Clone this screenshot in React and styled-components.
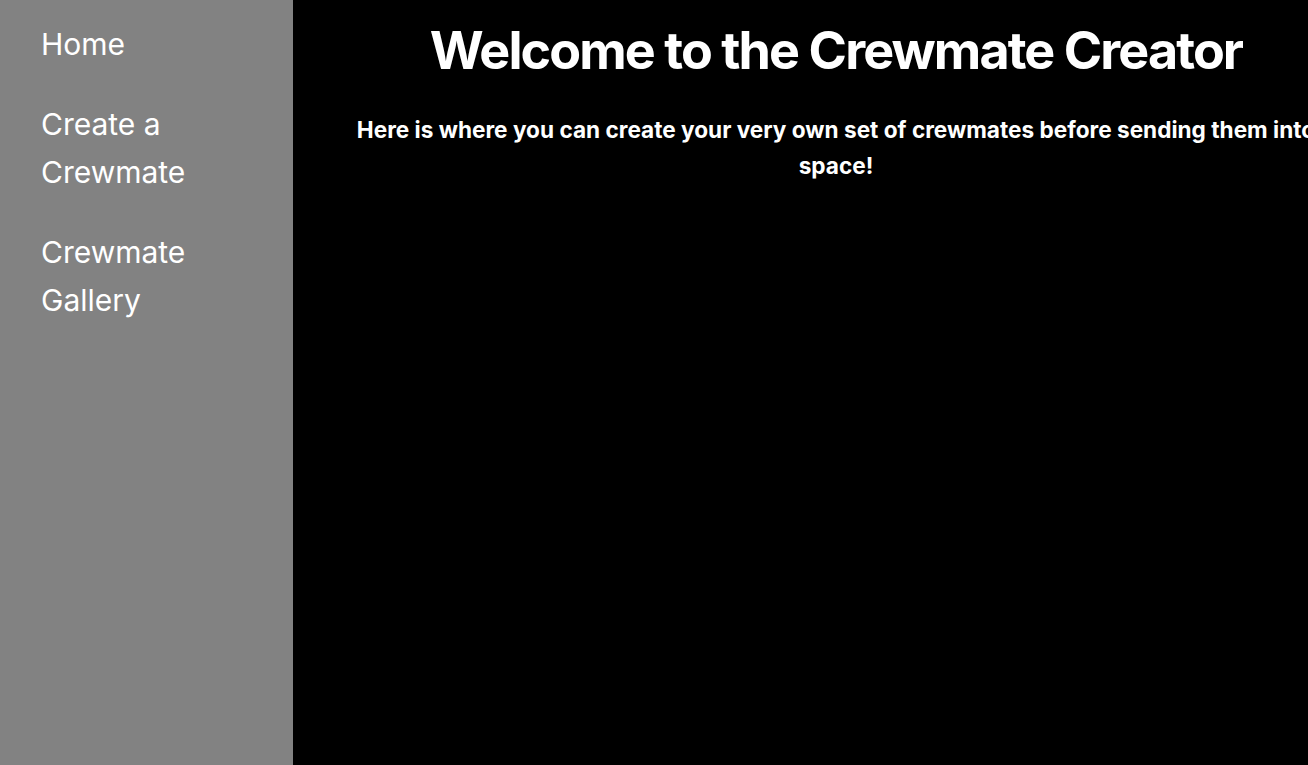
import styled, { createGlobalStyle } from 'styled-components';

const GlobalStyle = createGlobalStyle`
  html, body {
    margin: 0;
    padding: 0;
    height: 100%;
    overflow: hidden;
    background: #000;
    font-family: Inter, "Noto Sans", sans-serif;
  }
  #root {
    height: 100%;
  }
`;

const Layout = styled.div`
  display: flex;
  height: 100%;
`;

const Sidebar = styled.nav`
  flex: 0 0 293px;
  background: #828282;
  box-sizing: border-box;
  padding: 20px 0 0 41px;
  display: flex;
  flex-direction: column;
  gap: 32px;
`;

const NavLink = styled.a`
  display: block;
  width: 200px;
  color: #fff;
  font-size: 30px;
  line-height: 48px;
  text-decoration: none;
`;

const Main = styled.main`
  flex: 0 0 1086px;
  color: #fff;
  text-align: center;
  padding-top: 18px;
`;

const Title = styled.h1`
  margin: 0;
  font-size: 52px;
  font-weight: 700;
  line-height: 66px;
  letter-spacing: -1.9px;
`;

const Intro = styled.p`
  margin: 28px 0 0;
  padding: 0 40px;
  font-size: 22.6px;
  font-weight: 700;
  line-height: 36px;
`;

export default function App() {
  return (
    <>
      <GlobalStyle />
      <Layout>
        <Sidebar>
          <NavLink href="#">Home</NavLink>
          <NavLink href="#">Create a Crewmate</NavLink>
          <NavLink href="#">Crewmate Gallery</NavLink>
        </Sidebar>
        <Main>
          <Title>Welcome to the Crewmate Creator</Title>
          <Intro>
            Here is where you can create your very own set of crewmates before
            sending them into space!
          </Intro>
        </Main>
      </Layout>
    </>
  );
}
